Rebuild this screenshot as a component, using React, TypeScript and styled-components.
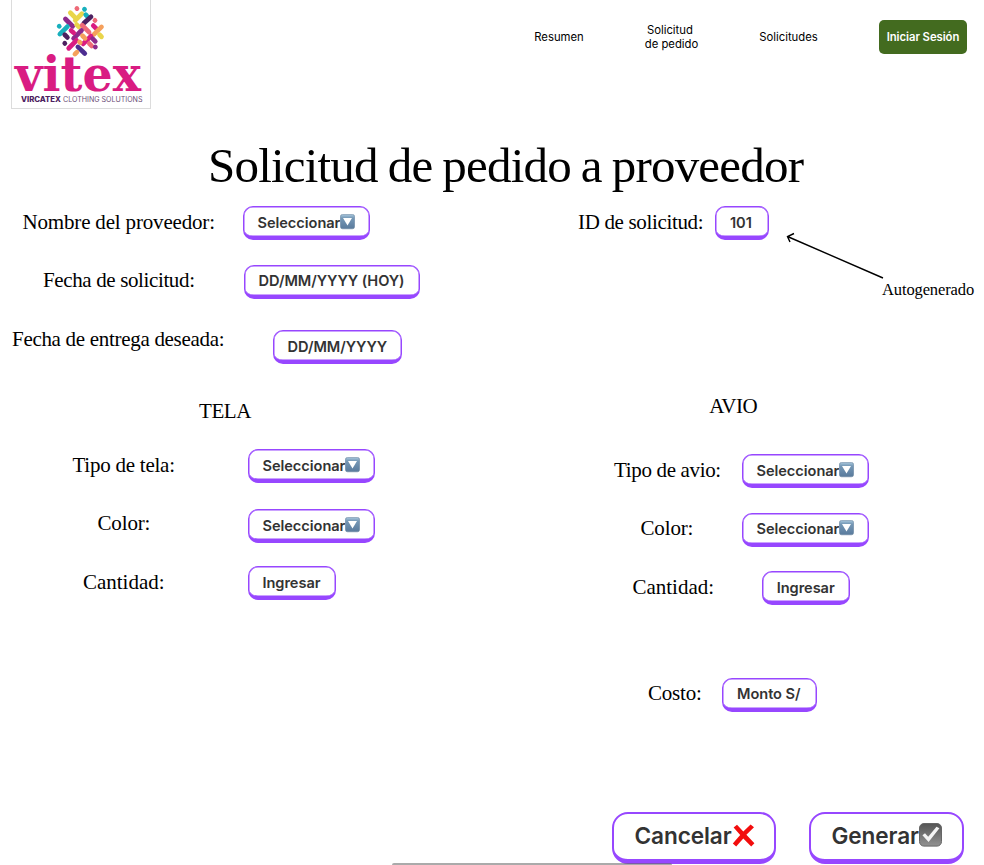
import React from 'react';
import styled, { createGlobalStyle } from 'styled-components';

const GlobalStyle = createGlobalStyle`
  * { box-sizing: border-box; }
  html, body { margin: 0; padding: 0; background: #fff; overflow: hidden; }
`;

const Page = styled.div`
  position: relative;
  width: 984px;
  height: 865px;
  overflow: hidden;
  background: #fff;
  color: #000;
  font-family: 'Liberation Serif', serif;
`;

const Header = styled.header`
  display: flex;
  align-items: flex-start;
  height: 109px;
  padding-left: 11px;
`;

const LogoFrame = styled.div`
  width: 140px;
  height: 109px;
  border: 1px solid #dcdcdc;
  border-top: 0;
`;

const Nav = styled.nav`
  display: grid;
  grid-template-columns: 112px 113px 121px 88px;
  align-items: center;
  justify-items: center;
  height: 74px;
  margin-left: 352px;
  font: 400 11.3px/14.5px Inter, sans-serif;
`;

const NavLink = styled.a`
  text-align: center;
  white-space: pre;
`;

const LoginButton = styled.button`
  width: 88px;
  height: 34px;
  margin-left: 60px;
  padding: 0;
  border: 0;
  border-radius: 5px;
  background: #436b1f;
  color: #fff;
  font: 600 11.3px/14px Inter, sans-serif;
  letter-spacing: -0.05px;
  white-space: nowrap;
`;

const Title = styled.h1`
  height: 60px;
  margin: 29px 0 8px 208px;
  font-size: 49px;
  font-weight: 400;
  line-height: 56px;
  letter-spacing: -0.8px;
  word-spacing: -1.5px;
  white-space: nowrap;
`;

const Columns = styled.main`
  display: grid;
  grid-template-columns: 500px 484px;
`;

const Column = styled.section`
  display: flex;
  flex-direction: column;
`;

const Field = styled.div<{ $h: number; $lead: number; $label: number }>`
  display: grid;
  grid-template-columns: ${p => p.$label}px max-content;
  align-items: start;
  height: ${p => p.$h}px;
  padding-left: ${p => p.$lead}px;
`;

const Label = styled.label<{ $drop: number; $track: number }>`
  margin-top: ${p => p.$drop}px;
  font-size: 21px;
  line-height: 24px;
  letter-spacing: ${p => p.$track}px;
  white-space: nowrap;
`;

const SectionTitle = styled.h2<{ $h: number; $lead: number; $drop: number; $track: number }>`
  height: ${p => p.$h}px;
  margin: 0;
  padding: ${p => p.$drop}px 0 0 ${p => p.$lead}px;
  font-size: 21px;
  font-weight: 400;
  line-height: 24px;
  letter-spacing: ${p => p.$track}px;
`;

const Control = styled.button<{ $w: number }>`
  display: flex;
  align-items: center;
  width: ${p => p.$w}px;
  height: 34px;
  padding: 2px 0 0 14px;
  border: 1.5px solid #9747ff;
  border-bottom-width: 4px;
  border-radius: 10px;
  background: #fff;
  box-shadow: inset 0 0 0 0.5px #9747ff;
  color: #333;
  font: 600 14.6px/18px Inter, sans-serif;
  letter-spacing: -0.05px;
  white-space: nowrap;
`;

const Actions = styled.footer`
  display: flex;
  gap: 33px;
  margin: 100px 0 0 612px;
`;

const ActionButton = styled.button<{ $w: number }>`
  display: flex;
  align-items: center;
  width: ${p => p.$w}px;
  height: 52px;
  padding: 0 0 0 20.5px;
  border: 2px solid #9747ff;
  border-bottom-width: 5px;
  border-radius: 16px;
  background: #fff;
  color: #333;
  font: 600 22.6px/28px Inter, sans-serif;
  font-variation-settings: 'opsz' 14;
  letter-spacing: -0.1px;
  white-space: nowrap;
`;

const Note = styled.div`
  position: absolute;
  left: 782px;
  top: 228px;
  width: 200px;
`;

const NoteText = styled.div`
  margin: 0 0 0 100px;
  font-size: 16.5px;
  line-height: 20px;
  letter-spacing: -0.12px;
`;

const ArrowSvg = styled.svg`
  display: block;
`;

const ScrollThumb = styled.div`
  position: absolute;
  left: 392px;
  top: 863px;
  width: 280px;
  height: 4px;
  border-radius: 2px;
  background: rgba(100, 100, 100, 0.55);
`;

const threads: [string, number, number, number, number][] = [
  ['#ee6a78', 82, 15, 82.3, 15.3],
  ['#e9d54b', 62, 28, 76, 42],
  ['#e9d54b', 97, 31, 77, 51],
  ['#18b0bd', 105, 17, 105.3, 17.3],
  ['#18b0bd', 109, 34, 113, 38],
  ['#4d2160', 125, 40, 103, 60],
  ['#ee6a78', 137, 51, 137.3, 51.3],
  ['#8d2a8c', 47, 47, 69, 69],
  ['#e9d54b', 81, 64, 88, 71],
  ['#18b0bd', 28, 69, 28.3, 69.3],
  ['#18b0bd', 53, 70, 30, 93],
  ['#ee6a78', 98, 66, 119, 87],
  ['#d91c82', 132, 67, 142, 77],
  ['#8d2a8c', 96, 82, 72, 106],
  ['#d91c82', 64, 82, 72, 89],
  ['#4d2160', 45, 95, 53, 103],
  ['#f5a05c', 157, 71, 134, 94],
  ['#d91c82', 125, 99, 101, 123],
  ['#f5a05c', 99, 98, 107, 106],
  ['#8d2a8c', 130, 107, 138, 115],
  ['#e9d54b', 151, 95, 157, 101],
  ['#4d2160', 45, 121, 45.3, 121.3],
  ['#d91c82', 81, 112, 57, 136],
  ['#f5a05c', 90, 117, 92, 119],
  ['#4d2e91', 85, 132, 106, 152],
  ['#ee6a78', 120, 122, 127, 129],
  ['#8d2a8c', 138, 132, 138.3, 132.3],
  ['#f5a05c', 82, 148, 76, 154],
];

const Logo = () => (
  <svg width="138" height="108" viewBox="12 0 138 108" role="img" aria-label="vitex">
    <g transform="translate(50 3.6) scale(0.328)" strokeWidth="14.4" strokeLinecap="round">
      {threads.map(([c, x1, y1, x2, y2], i) => (
        <line key={i} x1={x1} y1={y1} x2={x2} y2={y2} stroke={c} />
      ))}
    </g>
    <text x="15" y="91" fontFamily="DejaVu Serif" fontWeight="700" fontSize="48" fill="#d91c82" textLength="126" lengthAdjust="spacingAndGlyphs">vitex</text>
    <text x="21" y="102" fontFamily="Inter" fontWeight="800" fontSize="7" fill="#4d2160" textLength="40" lengthAdjust="spacingAndGlyphs">VIRCATEX</text>
    <text x="63" y="102" fontFamily="Inter" fontWeight="400" fontSize="7" fill="#6d4f78" textLength="79.5" lengthAdjust="spacingAndGlyphs">CLOTHING SOLUTIONS</text>
  </svg>
);

const DropIcon = () => (
  <svg width="15" height="18" viewBox="0 0 15 18">
    <defs>
      <linearGradient id="drop" x1="0" y1="0" x2="0" y2="1">
        <stop offset="0" stopColor="#a9c8dd" />
        <stop offset="0.25" stopColor="#7598b6" />
        <stop offset="1" stopColor="#597a9c" />
      </linearGradient>
    </defs>
    <rect x="0.4" y="0.4" width="14.2" height="14.4" rx="2.2" fill="url(#drop)" stroke="#66839e" strokeWidth="0.6" />
    <path d="M3 4h9L7.5 11.5z" fill="#fff" />
  </svg>
);

const CrossIcon = () => (
  <svg width="23" height="25" viewBox="0 0 23 25">
    <path d="M1.6 3.4 5 .8 11.3 7.4 18.6.6 22 3.2 14.4 10.8 22.4 19.2 19.2 22.4 11.3 14.4 4.2 22.4.8 19.4 8.2 11z" fill="#f20d0d" />
  </svg>
);

const CheckIcon = () => (
  <svg width="23" height="26" viewBox="0 0 23 26">
    <defs>
      <linearGradient id="check" x1="0" y1="0" x2="0" y2="1">
        <stop offset="0" stopColor="#555" />
        <stop offset="1" stopColor="#929292" />
      </linearGradient>
    </defs>
    <rect x="0.5" y="0.5" width="22" height="22.6" rx="4.5" fill="url(#check)" stroke="#666" />
    <path d="M3.4 12.2 6 10.2 9.2 13.8 17.5 3.8 20.4 5.2 9.6 19z" fill="#f4f4f4" />
  </svg>
);

interface RowProps {
  h: number; lead: number; label: number; drop: number; track: number;
  text: string; w: number; value: string; select?: boolean;
}

const Row = ({ h, lead, label, drop, track, text, w, value, select }: RowProps) => (
  <Field $h={h} $lead={lead} $label={label}>
    <Label $drop={drop} $track={track}>{text}</Label>
    <Control $w={w}>{value}{select && <DropIcon />}</Control>
  </Field>
);

export default function App() {
  return (
    <Page>
      <GlobalStyle />
      <Header>
        <LogoFrame><Logo /></LogoFrame>
        <Nav>
          <NavLink>Resumen</NavLink>
          <NavLink>{'Solicitud \nde pedido'}</NavLink>
          <NavLink>Solicitudes</NavLink>
          <LoginButton>Iniciar Sesión</LoginButton>
        </Nav>
      </Header>
      <Title>Solicitud de pedido a proveedor</Title>
      <Columns>
        <Column>
          <Row h={58.5} lead={22.5} label={220} drop={4} track={-0.17} text="Nombre del proveedor:" w={127.6} value="Seleccionar" select />
          <Row h={65.5} lead={43} label={200.5} drop={3.5} track={-0.37} text="Fecha de solicitud:" w={176.5} value="DD/MM/YYYY (HOY)" />
          <Row h={61} lead={12} label={260.5} drop={-3.5} track={-0.3} text="Fecha de entrega deseada:" w={129.5} value="DD/MM/YYYY" />
          <SectionTitle $h={58} $lead={199} $drop={7.7} $track={-0.4}>TELA</SectionTitle>
          <Row h={60} lead={72.5} label={175} drop={3.8} track={-0.24} text="Tipo de tela:" w={127.6} value="Seleccionar" select />
          <Row h={57} lead={97.5} label={150} drop={1.8} track={-0.15} text="Color:" w={127.6} value="Seleccionar" select />
          <Row h={34} lead={83} label={164.5} drop={3.5} track={-0.02} text="Cantidad:" w={88} value="Ingresar" />
        </Column>
        <Column>
          <Row h={185} lead={78} label={137} drop={4} track={-0.34} text="ID de solicitud:" w={54} value="101" />
          <SectionTitle $h={63.3} $lead={209.3} $drop={3} $track={-0.5}>AVIO</SectionTitle>
          <Row h={58.7} lead={114} label={127.5} drop={3.7} track={-0.34} text="Tipo de avio:" w={127.6} value="Seleccionar" select />
          <Row h={58.3} lead={140.5} label={101} drop={3.5} track={-0.15} text="Color:" w={127.6} value="Seleccionar" select />
          <Row h={106.7} lead={132.5} label={129.2} drop={4} track={-0.02} text="Cantidad:" w={88} value="Ingresar" />
          <Row h={34} lead={148} label={74} drop={3.5} track={-0.2} text="Costo:" w={94.5} value="Monto S/" />
        </Column>
      </Columns>
      <Actions>
        <ActionButton $w={164}>Cancelar<CrossIcon /></ActionButton>
        <ActionButton $w={155}>Generar<CheckIcon /></ActionButton>
      </Actions>
      <Note>
        <ArrowSvg width="110" height="52" viewBox="782 228 110 52">
          <path d="M883 278 787.5 236.5M794 233.5 787.5 236.5 790 242" fill="none" stroke="#000" strokeWidth="1.4" />
        </ArrowSvg>
        <NoteText>Autogenerado</NoteText>
      </Note>
      <ScrollThumb />
    </Page>
  );
}
